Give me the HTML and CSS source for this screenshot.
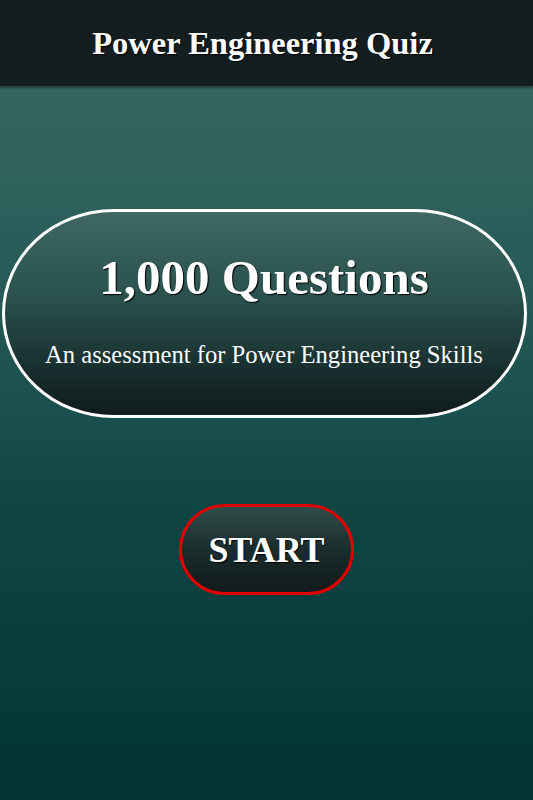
FILE: index.html
```html
<!DOCTYPE html>
<html>
<head>
<meta charset="utf-8">
<link rel="stylesheet" href="styles.css">
</head>
<body>
<div class="app">
  <header class="topbar"><h1 class="title">Power Engineering Quiz</h1></header>
  <main class="content">
    <section class="pill">
      <h2 class="count">1,000 Questions</h2>
      <p class="sub">An assessment for Power Engineering Skills</p>
    </section>
    <button class="start">START</button>
  </main>
</div>
</body>
</html>
```
FILE: styles.css
```css
html, body { margin: 0; padding: 0; }
body {
  width: 533px;
  height: 800px;
  overflow: hidden;
  font-family: "Liberation Serif", "Times New Roman", serif;
  color: #fff;
  background: linear-gradient(to bottom, #3f6b67 0px, #255a56 300px, #0e4543 520px, #033332 800px);
}
.app { display: flex; flex-direction: column; height: 800px; }
.topbar {
  height: 86px;
  background: #141e1e;
  display: flex;
  align-items: center;
  justify-content: center;
  padding-right: 8px;
  box-shadow: 0 2px 2px rgba(0,0,0,0.35);
}
.title {
  margin: 0;
  font-size: 32.5px;
  font-weight: bold;
  line-height: 36px;
  text-shadow: 1px 1px 1px #000;
}
.content {
  display: flex;
  flex-direction: column;
  align-items: center;
  padding-top: 123px;
  padding-right: 5px;
}
.pill {
  box-sizing: border-box;
  width: 525px;
  height: 209px;
  border: 3px solid #fff;
  border-radius: 112px / 105px;
  background: linear-gradient(to bottom, #3f6864 0%, #2a5350 40%, #172c2c 80%, #111b1b 100%);
  display: flex;
  flex-direction: column;
  align-items: center;
}
.count {
  margin: 40px 0 0;
  font-size: 49px;
  font-weight: bold;
  line-height: 52px;
  text-shadow: 1px 1px 1px #000;
}
.sub {
  margin: 37px 0 0;
  font-size: 24.6px;
  line-height: 28px;
}
.start {
  margin-top: 86px;
  margin-left: 5px;
  box-sizing: border-box;
  width: 175px;
  height: 91px;
  border: 3px solid #e00000;
  border-radius: 46px;
  background: linear-gradient(to bottom, #2f4d4a 0%, #1a2d2c 50%, #111a1a 100%);
  color: #fff;
  font-family: "Liberation Serif", "Times New Roman", serif;
  font-size: 36px;
  font-weight: bold;
  text-shadow: 1px 1px 1px #000;
  padding: 0;
}
```
